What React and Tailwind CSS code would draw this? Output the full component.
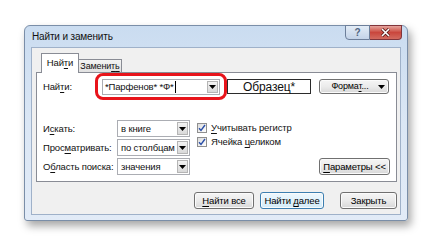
import React from 'react';

const U = ({ children }) => <span className="underline underline-offset-[2px]">{children}</span>;

const Tri = () => (
  <svg width="7" height="4" viewBox="0 0 7 4">
    <path d="M0 0H7L3.5 4Z" fill="#000" />
  </svg>
);

const Btn = ({ children, className = '', focused }) => (
  <div
    className={`flex items-center justify-center rounded-[3px] border text-[9.5px] leading-none text-black shadow-[inset_0_0_0_1px_#fbfbfb] ${
      focused
        ? 'border-[#3c7fb1] bg-linear-to-b from-[#eef8fe] to-[#d2ebf9]'
        : 'border-[#707070] bg-linear-to-b from-[#f5f5f5] via-[#ebebeb] to-[#d8d8d8]'
    } ${className}`}
  >
    {children}
  </div>
);

const Combo = ({ value }) => (
  <div className="flex h-[17px] w-[73px] border border-[#abadb3] bg-white">
    <div className="flex flex-1 items-center pl-[3px] text-[9.5px] leading-none">{value}</div>
    <div className="m-px flex w-[11px] items-center justify-center border border-[#b5b5b5] bg-linear-to-b from-[#f3f3f3] to-[#d9d9d9]">
      <Tri />
    </div>
  </div>
);

const Check = ({ children }) => (
  <div className="flex h-[14px] items-center gap-[4px]">
    <div className="flex h-[10px] w-[10px] items-center justify-center border border-[#8f8f8f] bg-linear-to-br from-[#dcdcdc] to-white">
      <svg width="8" height="8" viewBox="0 0 8 8">
        <path d="M1 4.2L3 6.5L7 1" fill="none" stroke="#2a4fa8" strokeWidth="1.4" />
      </svg>
    </div>
    <span className="text-[9.5px] leading-none">{children}</span>
  </div>
);

export default function App() {
  return (
    <div className="h-[246px] w-[434px] whitespace-nowrap bg-white pl-[24px] pt-[25px] font-['Liberation_Sans',Arial,sans-serif] tracking-[-0.15px] text-[#111]">
      {/* window */}
      <div className="flex h-[196px] w-[384px] flex-col rounded-t-[6px] rounded-b-[3px] border border-[#7a8ea8] bg-linear-to-b from-[#cadcf0] via-[#dbe7f5] to-[#e2ebf7] px-[6px] pb-[5px] shadow-[3px_5px_9px_rgba(0,0,0,0.35)]">
        {/* title bar */}
        <div className="flex h-[21px] items-start justify-between">
          <span className="self-center pl-[1px] pt-[1px] text-[10px] leading-none">Найти и заменить</span>
          <div className="-mt-px mr-[-1px] flex h-[15px]">
            <div className="flex w-[25px] items-center justify-center rounded-bl-[4px] border border-[#6d7f9a] bg-linear-to-b from-[#e3ecf6] to-[#c3d3e8] text-[10px] font-bold leading-none text-[#4f6480]">
              ?
            </div>
            <div className="flex w-[32px] items-center justify-center rounded-br-[4px] border border-l-0 border-[#80343a] bg-linear-to-b from-[#e4a39d] via-[#c9463d] to-[#d26a5f]">
              <svg width="11" height="9" viewBox="0 0 11 9">
                <path d="M2 1L9 8M9 1L2 8" stroke="#4a1010" strokeWidth="3" />
                <path d="M2 1L9 8M9 1L2 8" stroke="#fff" strokeWidth="1.6" />
              </svg>
            </div>
          </div>
        </div>

        {/* client area */}
        <div className="flex flex-1 flex-col border border-[#9fb1c9] bg-[#f0f0f0] pl-[4px] pr-[3px] pt-[5px]">
          {/* tabs */}
          <div className="relative z-10 flex h-[19px] items-end pl-[5px]">
            <div className="-mb-px flex h-[20px] w-[38px] items-center justify-center border border-b-0 border-[#898c95] bg-white pb-[2px] text-[9.5px] leading-none">
              <span>
                Най<U>т</U>и
              </span>
            </div>
            <div className="flex h-[13px] w-[43px] items-center justify-center border border-b-0 border-l-0 border-[#898c95] bg-linear-to-b from-[#f3f3f3] to-[#e1e1e1] text-[9px] leading-none">
              <span>
                Замени<U>т</U><U>ь</U>
              </span>
            </div>
          </div>

          {/* tab panel */}
          <div className="flex h-[110px] flex-col border border-[#898c95] bg-white pl-[6px] pr-[6px]">
            <div className="flex items-center">
              <span className="w-[52px] text-[9.5px] leading-none">
                Най<U>т</U>и:
              </span>
              <div className="flex h-[27px] w-[132px] items-center rounded-[8px] border-[3px] border-[#e8141b] px-[4px]">
                <div className="flex h-[16px] flex-1 border border-[#abadb3] bg-white">
                  <div className="flex flex-1 items-center pl-[2px] text-[9.5px] leading-none">
                    *Парфенов* *Ф*<span className="ml-px h-[12px] w-px bg-black" />
                  </div>
                  <div className="m-px flex w-[11px] items-center justify-center border border-[#b5b5b5] bg-linear-to-b from-[#f3f3f3] to-[#d9d9d9]">
                    <Tri />
                  </div>
                </div>
              </div>
              <div className="flex h-[15px] w-[84px] items-center justify-center border border-[#2b2b2b] bg-white text-[12px] leading-none">
                Образец*
              </div>
              <Btn className="ml-[8px] h-[15px] w-[70px] gap-[9px] pl-[8px] text-[9px]">
                <span>
                  Форма<U>т</U>...
                </span>
                <Tri />
              </Btn>
            </div>

            <div className="mt-[20px] flex">
              <div className="flex flex-col gap-[2px]">
                {[
                  [<>И<U>с</U>кать:</>, 'в книге'],
                  [<>Прос<U>м</U>атривать:</>, 'по столбцам'],
                  [<>О<U>б</U>ласть поиска:</>, 'значения'],
                ].map(([label, value], i) => (
                  <div key={i} className="flex items-center">
                    <span className="w-[74px] text-[9.5px] leading-none">{label}</span>
                    <Combo value={value} />
                  </div>
                ))}
              </div>
              <div className="ml-[7px] flex flex-col pt-[1px]">
                <Check>
                  <U>У</U>читывать регистр
                </Check>
                <Check>
                  Ячейка <U>ц</U>еликом
                </Check>
              </div>
              <div className="flex flex-1 items-end justify-end">
                <Btn className="h-[17px] w-[71px]">
                  <span>
                    <U>П</U>араметры &lt;&lt;
                  </span>
                </Btn>
              </div>
            </div>
          </div>

          {/* bottom buttons */}
          <div className="mt-[10px] flex justify-end">
            <Btn className="h-[17px] w-[60px]">
              <span>
                <U>Н</U>айти все
              </span>
            </Btn>
            <Btn focused className="ml-[6px] h-[17px] w-[64px]">
              <span>
                Найти <U>д</U>алее
              </span>
            </Btn>
            <Btn className="ml-[16px] h-[17px] w-[57px]">Закрыть</Btn>
          </div>
        </div>
      </div>
    </div>
  );
}
